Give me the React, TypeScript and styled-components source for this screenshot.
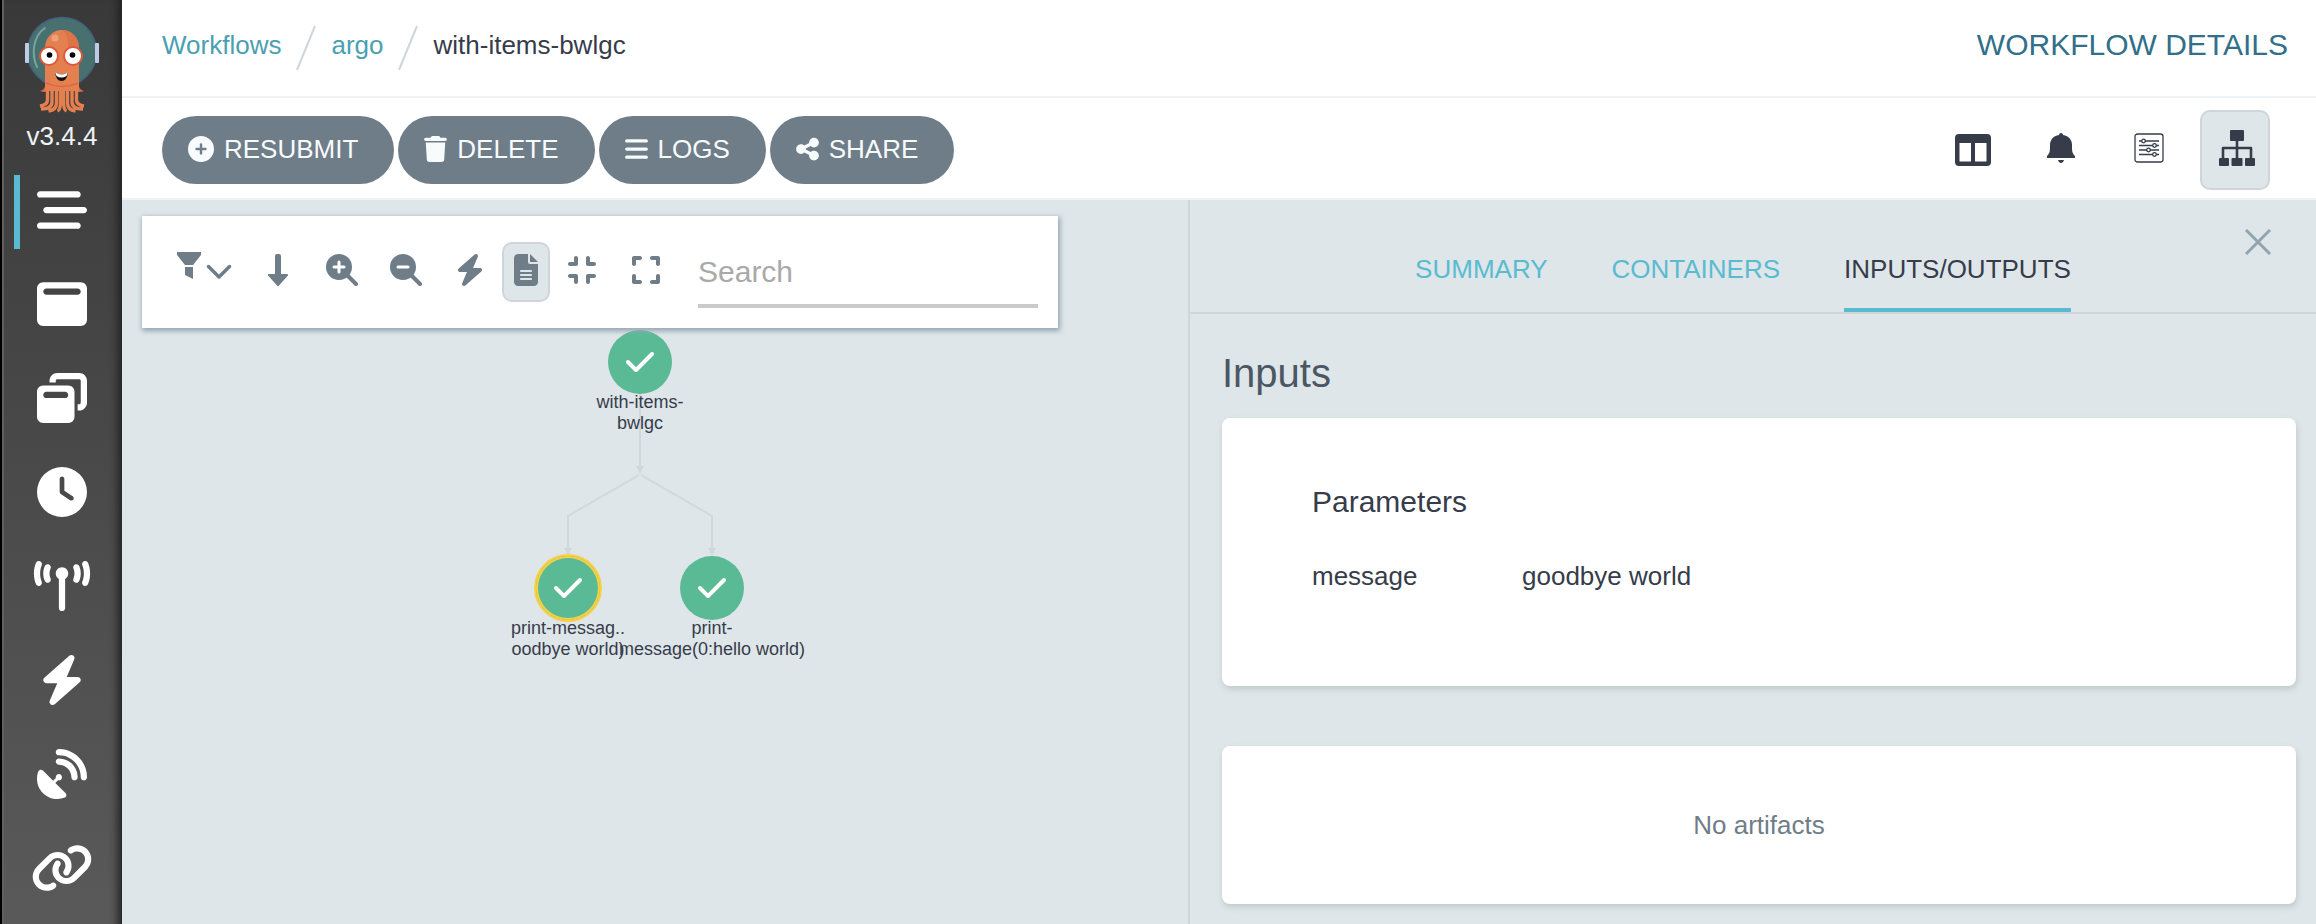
import React from 'react';
import styled, { createGlobalStyle } from 'styled-components';
import {
  FaBarsStaggered, FaWindowMaximize, FaWindowRestore, FaClock, FaTowerBroadcast, FaBolt, FaSatelliteDish, FaLink,
  FaCirclePlus, FaTrash, FaBars, FaShareNodes, FaChevronDown,
  FaFileLines, FaCompress, FaExpand, FaCheck,
} from 'react-icons/fa6';

const Global = createGlobalStyle`
  *, *::before, *::after { box-sizing: border-box; }
  body {
    margin: 0;
    background: #dee6e9;
    color: #363c4a;
    font-family: "Liberation Sans", Arial, sans-serif;
    font-size: 26px;
    line-height: 32px;
  }
  button, input { font: inherit; }
  button { border: 0; padding: 0; background: none; color: inherit; cursor: pointer; }
  a { text-decoration: none; }
  svg { display: block; flex: none; }
`;

const Shell = styled.div`
  display: grid;
  grid-template-columns: 122px minmax(0, 1fr);
  height: 100vh;
  overflow: hidden;
`;

const Sidebar = styled.nav`
  display: flex;
  flex-direction: column;
  align-items: center;
  border-left: 2px solid #000;
  padding: 16px 0 0;
  overflow: hidden;
  color: #fff;
  background: linear-gradient(#393939, #5b5b5b);
  box-shadow: inset 2px 0 0 #606060, inset -10px 0 8px -6px #222;
`;

const Version = styled.div`
  flex: none;
  height: 61px;
  font-size: 26px;
  line-height: 44px;
  color: #eef3f6;
`;

const NavLink = styled.a<{ $active?: boolean }>`
  display: flex;
  align-items: center;
  justify-content: center;
  flex: none;
  width: 96px;
  height: 74px;
  margin-bottom: 20px;
  padding: 0 6px 4px 0;
  border-left: 6px solid ${p => (p.$active ? '#5abbd0' : 'transparent')};
  color: #fff;
  svg { width: 62px; height: 50px; }
`;

const Main = styled.div`
  display: flex;
  flex-direction: column;
  min-width: 0;
`;

const TopBar = styled.header`
  display: flex;
  justify-content: space-between;
  align-items: center;
  height: 98px;
  padding: 0 28px 6px 40px;
  background: #fff;
  border-bottom: 2px solid #edf2f6;
`;

const Breadcrumbs = styled.div`
  display: flex;
  align-items: center;
  gap: 15px;
`;

const Crumb = styled.a`
  color: #4aa0b1;
`;

const PageTitle = styled.h1`
  margin: 0;
  font-size: 30px;
  font-weight: 400;
  color: #316f8a;
`;

const ActionBar = styled.div`
  display: flex;
  justify-content: space-between;
  align-items: center;
  height: 102px;
  padding: 4px 46px 0 40px;
  background: #fff;
  border-bottom: 2px solid #edf2f6;
`;

const Actions = styled.div`
  display: flex;
  gap: 4px;
`;

const Pill = styled.button<{ $iconWidth?: number }>`
  display: flex;
  align-items: center;
  gap: 10px;
  height: 68px;
  padding: 0 36px 2px 26px;
  border-radius: 34px;
  background: #6f7d88;
  color: #f8fbfb;
  svg { width: ${p => p.$iconWidth ?? 23}px; height: 26px; }
`;

const Views = styled.div`
  display: flex;
  gap: 18px;
`;

const ViewButton = styled.button<{ $active?: boolean }>`
  display: flex;
  align-items: center;
  justify-content: center;
  width: 70px;
  height: 80px;
  padding: 0 0 4px 4px;
  border: 2px solid ${p => (p.$active ? '#ccd6db' : 'transparent')};
  border-radius: 10px;
  background: ${p => (p.$active ? '#dee6e9' : 'transparent')};
  color: #363c4a;
`;

const Content = styled.div`
  display: grid;
  grid-template-columns: minmax(0, 1066fr) minmax(0, 1128fr);
  flex: 1;
  min-height: 0;
`;

const GraphArea = styled.section`
  display: flex;
  flex-direction: column;
  align-items: flex-start;
  padding: 16px 20px;
`;

const GraphToolbar = styled.div`
  display: flex;
  align-items: center;
  z-index: 1;
  width: 916px;
  height: 112px;
  padding: 0 20px 0 32px;
  background: #fff;
  color: #6f7d88;
  box-shadow: 1px 2px 5px 1px #93a5b3;
`;

const ToolGroup = styled.div<{ $gap: number }>`
  display: flex;
  gap: ${p => p.$gap}px;
`;

const ToolButton = styled.button<{ $active?: boolean }>`
  display: flex;
  align-items: center;
  justify-content: center;
  width: 48px;
  height: 60px;
  padding-bottom: 4px;
  border: 2px solid ${p => (p.$active ? '#ccd6db' : 'transparent')};
  border-radius: 10px;
  background: ${p => (p.$active ? '#dee6e9' : 'transparent')};
`;

const FilterButton = styled(ToolButton)`
  gap: 4px;
  width: 62px;
  margin-right: 18px;
`;

const SearchInput = styled.input`
  flex: 1;
  min-width: 0;
  height: 72px;
  margin: 0 0 0 28px;
  padding: 4px 0 0;
  border: 0;
  border-bottom: 4px solid #cacaca;
  outline: 0;
  background: transparent;
  font-size: 30px;
  color: #363c4a;
  &::placeholder { color: #a9a9a9; opacity: 1; }
`;

const Canvas = styled.div`
  position: relative;
  width: 916px;
  height: 400px;
`;

const Edges = styled.svg`
  position: absolute;
  left: 0;
  top: 0;
`;

const Node = styled.button`
  position: absolute;
  display: flex;
  flex-direction: column;
  align-items: center;
  width: 200px;
  margin-left: -100px;
  font-size: 18px;
  line-height: 21px;
  white-space: pre;
  color: #363c4a;
`;

const NodeDisc = styled.span<{ $selected?: boolean }>`
  display: flex;
  align-items: center;
  justify-content: center;
  width: 64px;
  height: 64px;
  margin-bottom: -2px;
  border-radius: 50%;
  background: #5aba96;
  color: #fff;
  box-shadow: ${p => (p.$selected ? '0 0 0 2px #f8d045, inset 0 0 0 2px #f8d045' : 'none')};
`;

const Details = styled.aside`
  position: relative;
  border-left: 2px solid #ccd6db;
  min-width: 0;
`;

const Tabs = styled.div`
  display: flex;
  justify-content: center;
  gap: 64px;
  height: 114px;
  padding: 26px 20px 0 0;
  border-bottom: 2px solid #ccd6db;
`;

const Tab = styled.button<{ $active?: boolean }>`
  height: 86px;
  padding-top: 4px;
  border-bottom: 4px solid ${p => (p.$active ? '#5abbd0' : 'transparent')};
  color: ${p => (p.$active ? '#363c4a' : '#5abbd0')};
`;

const CloseButton = styled.button`
  position: absolute;
  top: 29px;
  right: 45px;
`;

const PanelBody = styled.div`
  padding: 34px 20px 0 32px;
`;

const SectionTitle = styled.h2`
  margin: 0 0 20px;
  font-size: 40px;
  line-height: 50px;
  font-weight: 400;
  color: #4b5763;
`;

const Card = styled.section`
  margin-bottom: 60px;
  border-radius: 8px;
  background: #fff;
  box-shadow: 1px 3px 6px #bfc8cc;
`;

const ParameterCard = styled(Card)`
  height: 268px;
  padding: 66px 90px;
`;

const EmptyCard = styled(Card)`
  height: 158px;
  line-height: 158px;
  text-align: center;
  color: #6f7d88;
`;

const CardTitle = styled.h3`
  margin: 0 0 40px;
  font-size: 30px;
  line-height: 36px;
  font-weight: 400;
`;

const ParameterTable = styled.table`
  border-collapse: collapse;
  width: 100%;
  th, td { padding: 0; text-align: left; font-weight: 400; }
  th { width: 210px; }
`;

const ArgoLogo = () => (
  <svg width="76" height="98" viewBox="0 0 76 98" aria-hidden="true">
    <circle cx="38" cy="36" r="34.500" fill="#47706f" stroke="#45627f" strokeWidth="1.500" />
    <path d="M21 12C9 20 7 38 13 51" fill="none" stroke="#78a39e" strokeWidth="2" strokeLinecap="round" />
    <rect x="1" y="27" width="4" height="20" rx="1" fill="#bccbe6" />
    <rect x="71" y="27" width="4" height="20" rx="1" fill="#bccbe6" />
    <path d="M22 64q0 10-6 11 5 2 8 0zM54 64q0 10 6 11-5 2-8 0z" fill="#dc6847" />
    <path d="M21 32C21 21 29 14 38 14s17 7 17 18v43H21z" fill="#e4804f" />
    <path d="M38 14c9 0 17 7 17 18v17l-11-8V30c0-8-2-13-6-16z" fill="#dd7349" />
    <path
      d="M23.500 73v11q0 5-7.500 6M28 73v13q0 7-11 7M32.500 73v14q0 7-8 8M36.500 73v12q0 9-3 10M39.500 73v12q0 9 3 10M43.500 73v14q0 7 8 8M48 73v13q0 7 11 7M52.500 73v11q0 5 7.500 6"
      fill="none"
      stroke="#e4804f"
      strokeWidth="3.400"
    />
    <path d="M22 67q16 7 32 0" fill="none" stroke="#dc6847" strokeWidth="1.500" />
    <circle cx="31" cy="22" r="3.500" fill="#eda07e" />
    <circle cx="25" cy="40" r="9" fill="#fff" stroke="#dc593e" strokeWidth="2" />
    <circle cx="49" cy="40" r="9" fill="#fff" stroke="#dc593e" strokeWidth="2" />
    <circle cx="25.500" cy="39" r="2.800" fill="#000" />
    <circle cx="48.500" cy="39" r="2.800" fill="#000" />
    <path d="M31 56q7 5 13 0-1 9-6.500 9T31 56z" fill="#111" />
    <path d="M31 56q7 5 13 0l-1.500 4q-5 3-10 0z" fill="#fff" />
  </svg>
);

const ZoomIcon = ({ plus }: { plus?: boolean }) => (
  <svg width="32" height="32" viewBox="0 0 32 32" aria-hidden="true">
    <circle cx="13" cy="13" r="13" fill="currentColor" />
    <path d="M21 21l9 9" stroke="currentColor" strokeWidth="4" strokeLinecap="round" />
    <path d={plus ? 'M8 13h10M13 8v10' : 'M8 13h10'} stroke="#fff" strokeWidth="3" strokeLinecap="round" />
  </svg>
);

const FilterIcon = () => (
  <svg width="24" height="38" viewBox="0 0 24 38" aria-hidden="true">
    <path d="M0 1h24v3l-8 10H8L0 4zM8 16h8v12l-8-4z" fill="currentColor" />
  </svg>
);

const ArrowDownIcon = () => (
  <svg width="20" height="32" viewBox="0 0 20 32" fill="currentColor" aria-hidden="true">
    <path d="M7 2a2 2 0 0 1 2-2h2a2 2 0 0 1 2 2v18h6q2 0 .5 2L11 31.500q-1 1-2 0L.5 22Q-1 20 1 20h6z" />
  </svg>
);

const ColumnsIcon = () => (
  <svg width="36" height="36" viewBox="0 0 36 36" fill="currentColor" aria-hidden="true">
    <path
      fillRule="evenodd"
      d="M4 4h28a4 4 0 0 1 4 4v24a4 4 0 0 1-4 4H4a4 4 0 0 1-4-4V8a4 4 0 0 1 4-4zM4.500 13v18.500h11.500V13zM20 13v18.500h11.500V13z"
    />
  </svg>
);

const BellIcon = () => (
  <svg width="28" height="30" viewBox="0 0 28 30" fill="currentColor" aria-hidden="true">
    <path d="M14 0a2 2 0 0 1 2 2c6 1 9 5 9 10 0 6 0 8 3 11v2H0v-2c3-3 3-5 3-11C3 7 6 3 12 2a2 2 0 0 1 2-2zM11 27h6c-1 4-5 4-6 0z" />
  </svg>
);

const SitemapIcon = () => (
  <svg width="36" height="36" viewBox="0 0 36 36" fill="currentColor" aria-hidden="true">
    <rect x="11" y="0" width="14" height="11" rx="1" />
    <rect x="0" y="28" width="10" height="8" rx="1" />
    <rect x="12.500" y="28" width="11" height="8" rx="1" />
    <rect x="26" y="28" width="10" height="8" rx="1" />
    <path d="M4 28V18h28v10M18 11v17" fill="none" stroke="currentColor" strokeWidth="2.600" strokeLinejoin="round" />
  </svg>
);

const SlidersIcon = () => (
  <svg width="30" height="30" viewBox="0 0 30 30" fill="none" stroke="currentColor" strokeWidth="1.300" aria-hidden="true">
    <rect x="1" y="1" width="28" height="28" rx="2.500" />
    <path d="M5 8h20M5 12.500h20M5 17h20M5 21.500h20" />
    <g fill="#fff">
      <circle cx="9.500" cy="8" r="1.800" />
      <circle cx="20.500" cy="12.500" r="1.800" />
      <circle cx="14.500" cy="17" r="1.800" />
      <circle cx="20.500" cy="21.500" r="1.800" />
    </g>
  </svg>
);

const CrumbSlash = () => (
  <svg width="20" height="50" viewBox="0 0 20 50" aria-hidden="true">
    <path d="M1 50L19 6" stroke="#ccd6db" strokeWidth="2" />
  </svg>
);

const navItems = [
  { label: 'Workflows', Icon: FaBarsStaggered, active: true },
  { label: 'Workflow Templates', Icon: FaWindowMaximize },
  { label: 'Cluster Workflow Templates', Icon: FaWindowRestore },
  { label: 'Cron Workflows', Icon: FaClock },
  { label: 'Event Flow', Icon: FaTowerBroadcast },
  { label: 'Event Sources', Icon: FaBolt },
  { label: 'Sensors', Icon: FaSatelliteDish },
  { label: 'Workflow Event Bindings', Icon: FaLink },
];

const nodes = [
  { label: 'with-items-\nbwlgc', left: 498, top: 2 },
  { label: 'print-messag..\noodbye world)', left: 426, top: 228, selected: true },
  { label: 'print-\nmessage(0:hello world)', left: 570, top: 228 },
];

export default function App() {
  return (
    <>
      <Global />
      <Shell>
        <Sidebar>
          <ArgoLogo />
          <Version>v3.4.4</Version>
          {navItems.map(({ label, Icon, active }) => (
            <NavLink key={label} href="#" aria-label={label} $active={active}><Icon /></NavLink>
          ))}
        </Sidebar>
        <Main>
          <TopBar>
            <Breadcrumbs>
              <Crumb href="#">Workflows</Crumb>
              <CrumbSlash />
              <Crumb href="#">argo</Crumb>
              <CrumbSlash />
              <span>with-items-bwlgc</span>
            </Breadcrumbs>
            <PageTitle>WORKFLOW DETAILS</PageTitle>
          </TopBar>
          <ActionBar>
            <Actions>
              <Pill $iconWidth={26}><FaCirclePlus />RESUBMIT</Pill>
              <Pill><FaTrash />DELETE</Pill>
              <Pill><FaBars />LOGS</Pill>
              <Pill><FaShareNodes />SHARE</Pill>
            </Actions>
            <Views>
              <ViewButton aria-label="Details panel"><ColumnsIcon /></ViewButton>
              <ViewButton aria-label="Events"><BellIcon /></ViewButton>
              <ViewButton aria-label="Timeline"><SlidersIcon /></ViewButton>
              <ViewButton aria-label="Graph" $active><SitemapIcon /></ViewButton>
            </Views>
          </ActionBar>
          <Content>
            <GraphArea>
              <GraphToolbar>
                <FilterButton aria-label="Filter"><FilterIcon /><FaChevronDown size={28} /></FilterButton>
                <ToolGroup $gap={16}>
                  <ToolButton aria-label="Direction"><ArrowDownIcon /></ToolButton>
                  <ToolButton aria-label="Zoom in"><ZoomIcon plus /></ToolButton>
                  <ToolButton aria-label="Zoom out"><ZoomIcon /></ToolButton>
                  <ToolGroup $gap={8}>
                    <ToolButton aria-label="Fast renderer"><FaBolt size={32} /></ToolButton>
                    <ToolButton aria-label="Show artifacts" $active><FaFileLines size={32} /></ToolButton>
                    <ToolButton aria-label="Collapse"><FaCompress size={32} /></ToolButton>
                  </ToolGroup>
                  <ToolButton aria-label="Expand"><FaExpand size={32} /></ToolButton>
                </ToolGroup>
                <SearchInput type="search" placeholder="Search" aria-label="Search" />
              </GraphToolbar>
              <Canvas>
                <Edges width="916" height="400" viewBox="0 0 916 400" fill="none" stroke="#cfd8dc" strokeWidth="2">
                  <path d="M498 66V140M497 147L426 188V222M499 147L570 188V222" />
                  <path d="M494 138h8l-4 8zM422 220h8l-4 8zM566 220h8l-4 8z" fill="#cfd8dc" strokeWidth="0" />
                </Edges>
                {nodes.map(n => (
                  <Node key={n.label} style={{ left: n.left, top: n.top }}>
                    <NodeDisc $selected={n.selected}><FaCheck size={32} /></NodeDisc>
                    {n.label}
                  </Node>
                ))}
              </Canvas>
            </GraphArea>
            <Details>
              <Tabs role="tablist">
                <Tab role="tab">SUMMARY</Tab>
                <Tab role="tab">CONTAINERS</Tab>
                <Tab role="tab" $active aria-selected>INPUTS/OUTPUTS</Tab>
              </Tabs>
              <CloseButton aria-label="Close">
                <svg width="26" height="26" viewBox="0 0 26 26" stroke="#92a4b0" strokeWidth="3" aria-hidden="true">
                  <path d="M1 1l24 24M25 1L1 25" />
                </svg>
              </CloseButton>
              <PanelBody>
                <SectionTitle>Inputs</SectionTitle>
                <ParameterCard>
                  <CardTitle>Parameters</CardTitle>
                  <ParameterTable>
                    <tbody>
                      <tr><th scope="row">message</th><td>goodbye world</td></tr>
                    </tbody>
                  </ParameterTable>
                </ParameterCard>
                <EmptyCard>No artifacts</EmptyCard>
              </PanelBody>
            </Details>
          </Content>
        </Main>
      </Shell>
    </>
  );
}
